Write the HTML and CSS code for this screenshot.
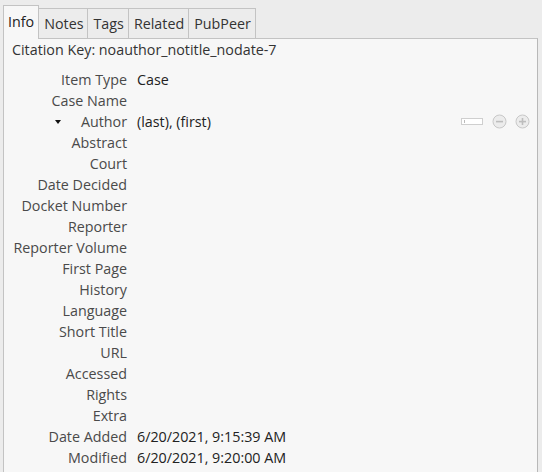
FILE: index.html
```html
<!DOCTYPE html>
<html>
<head>
<meta charset="utf-8">
<link rel="stylesheet" href="styles.css">
</head>
<body>
<div class="tabs">
  <div class="tab selected">Info</div>
  <div class="tab">Notes</div>
  <div class="tab">Tags</div>
  <div class="tab">Related</div>
  <div class="tab">PubPeer</div>
</div>
<div class="panel">
  <div class="citekey">Citation Key: noauthor_notitle_nodate-7</div>
  <div class="fields">
    <div class="label">Item Type</div><div class="value strong">Case</div>
    <div class="label">Case Name</div><div class="value"></div>
    <div class="label author-label"><span class="twisty"></span><span>Author</span></div>
    <div class="value author-value"><span>(last), (first)</span>
      <span class="controls">
        <span class="mini-input"></span>
        <svg class="circ" width="15" height="15" viewBox="0 0 15 15"><circle cx="7.5" cy="7.5" r="6.5" fill="#ececec" stroke="#c8c8c8"/><rect x="4" y="6.8" width="7" height="1.6" fill="#bdbdbd"/></svg>
        <svg class="circ" width="15" height="15" viewBox="0 0 15 15"><circle cx="7.5" cy="7.5" r="6.5" fill="#ececec" stroke="#c8c8c8"/><rect x="4" y="6.8" width="7" height="1.6" fill="#bdbdbd"/><rect x="6.7" y="4" width="1.6" height="7" fill="#bdbdbd"/></svg>
      </span>
    </div>
    <div class="label">Abstract</div><div class="value"></div>
    <div class="label">Court</div><div class="value"></div>
    <div class="label">Date Decided</div><div class="value"></div>
    <div class="label">Docket Number</div><div class="value"></div>
    <div class="label">Reporter</div><div class="value"></div>
    <div class="label">Reporter Volume</div><div class="value"></div>
    <div class="label">First Page</div><div class="value"></div>
    <div class="label">History</div><div class="value"></div>
    <div class="label">Language</div><div class="value"></div>
    <div class="label">Short Title</div><div class="value"></div>
    <div class="label">URL</div><div class="value"></div>
    <div class="label">Accessed</div><div class="value"></div>
    <div class="label">Rights</div><div class="value"></div>
    <div class="label">Extra</div><div class="value"></div>
    <div class="label">Date Added</div><div class="value">6/20/2021, 9:15:39 AM</div>
    <div class="label">Modified</div><div class="value">6/20/2021, 9:20:00 AM</div>
  </div>
</div>
</body>
</html>
```

FILE: styles.css
```css
html, body {
  margin: 0;
  padding: 0;
  background: #ececec;
  height: 100%;
  overflow: hidden;
}
body {
  font-family: "Open Sans", "Noto Sans", sans-serif;
  font-size: 14.3px;
  color: #3c3c3c;
}
.tabs {
  display: flex;
  align-items: flex-end;
  padding-left: 3px;
  padding-top: 5px;
  height: 33px;
  position: relative;
  z-index: 1;
}
.tab {
  height: 30px;
  box-sizing: border-box;
  border: 1px solid #c3c3c3;
  border-left: none;
  border-bottom: none;
  padding: 0 4px 0 5px;
  line-height: 29px;
  color: #333;
}
.tab.selected {
  height: 34px;
  margin-bottom: -1px;
  border-left: 1px solid #c3c3c3;
  background: #f7f7f7;
  line-height: 32px;
  padding: 0 4px 0 4px;
  color: #222;
}
.panel {
  margin-left: 3px;
  width: 535px;
  box-sizing: border-box;
  border: 1px solid #c3c3c3;
  border-right-color: #b8b8b8;
  background: #f7f7f7;
  height: 460px;
}
.citekey {
  padding-left: 8px;
  height: 21px;
  line-height: 21px;
  color: #333;
}
.fields {
  display: grid;
  grid-template-columns: 123px 1fr;
  column-gap: 10px;
  grid-auto-rows: 21px;
  margin-top: 9px;
}
.label {
  text-align: right;
  line-height: 21px;
  color: #4a4a4a;
  white-space: nowrap;
}
.value {
  line-height: 21px;
  color: #222;
  white-space: nowrap;
}
.author-label {
  display: flex;
  justify-content: space-between;
  align-items: center;
}
.twisty {
  width: 0;
  height: 0;
  margin-left: 51px;
  border-left: 3.5px solid transparent;
  border-right: 3.5px solid transparent;
  border-top: 4px solid #111;
}
.author-value {
  display: flex;
  align-items: center;
  justify-content: space-between;
  padding-right: 7px;
}
.controls {
  display: flex;
  align-items: center;
  gap: 8px;
}
.mini-input {
  width: 20px;
  height: 5px;
  border: 1px solid #cfcfcf;
  background: #fff;
  margin-right: 1px;
  position: relative;
}
.mini-input::before {
  content: "";
  position: absolute;
  left: 2px;
  top: 1px;
  width: 1px;
  height: 3px;
  background: #bbb;
}
.circ { display: block; }
```
